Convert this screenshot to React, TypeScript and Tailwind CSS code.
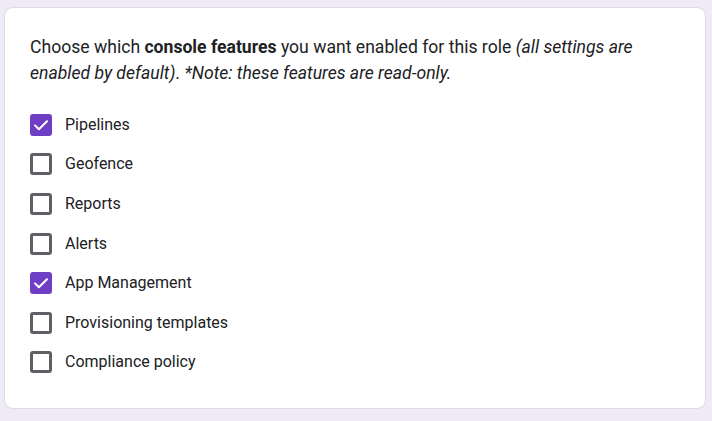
import React from "react";

const items = [
  { label: "Pipelines", checked: true },
  { label: "Geofence", checked: false },
  { label: "Reports", checked: false },
  { label: "Alerts", checked: false },
  { label: "App Management", checked: true },
  { label: "Provisioning templates", checked: false },
  { label: "Compliance policy", checked: false },
];

function Box({ checked }: { checked: boolean }) {
  if (checked) {
    return (
      <div className="w-[22px] h-[22px] rounded-[3px] bg-[#6e3fc4] flex items-center justify-center">
        <svg width="18" height="18" viewBox="0 0 18 18" fill="none">
          <path d="M3 9.4l3.9 3.9L15 5.2" stroke="white" strokeWidth="2" strokeLinecap="round" strokeLinejoin="round" />
        </svg>
      </div>
    );
  }
  return <div className="w-[22px] h-[22px] rounded-[3px] border-[3px] border-[#5f6066] bg-white" />;
}

export default function App() {
  return (
    <div className="w-[712px] h-[421px] bg-[#eeeaf7] pt-[7px] pl-[4px] pr-[6px] pb-[12px]" style={{ fontFamily: "Roboto, 'Liberation Sans', sans-serif" }}>
      <div className="h-full bg-white border border-[#dcdae2] rounded-[9px] pl-[25px] pr-[20px] pt-[26px]">
        <p className="text-[17.6px] leading-[26px] text-[#202124]">
          Choose which <b className="font-bold">console features</b> you want enabled for this role{" "}
          <i>(all settings are enabled by default)</i>. <i>*Note: these features are read-only.</i>
        </p>
        <div className="mt-[19px] flex flex-col">
          {items.map((it) => (
            <div key={it.label} className="h-[39.6px] flex items-center">
              <div className="w-[35px] flex"><Box checked={it.checked} /></div>
              <span className="text-[16px] text-[#202124]">{it.label}</span>
            </div>
          ))}
        </div>
      </div>
    </div>
  );
}
